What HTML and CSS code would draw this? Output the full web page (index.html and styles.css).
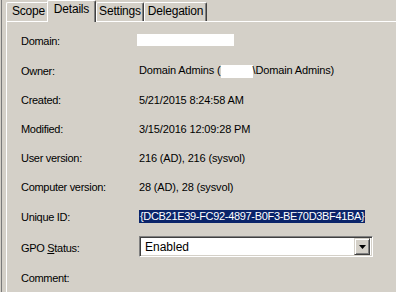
FILE: index.html
```html
<!DOCTYPE html>
<html>
<head>
<meta charset="utf-8">
<link rel="stylesheet" href="styles.css">
</head>
<body>
<div class="window">
  <div class="tabs">
    <div class="tab tab-scope">Scope</div>
    <div class="tab tab-details selected">Details</div>
    <div class="tab tab-settings">Settings</div>
    <div class="tab tab-delegation">Delegation</div>
  </div>
  <div class="panel">
    <div class="grid">
      <div class="label"><span>Domain:</span></div>
      <div class="value"><span class="redact redact-domain"></span></div>

      <div class="label"><span>Owner:</span></div>
      <div class="value"><span>Domain Admins (<span class="redact redact-owner"></span>\Domain Admins)</span></div>

      <div class="label"><span>Created:</span></div>
      <div class="value"><span>5/21/2015 8:24:58 AM</span></div>

      <div class="label"><span>Modified:</span></div>
      <div class="value"><span>3/15/2016 12:09:28 PM</span></div>

      <div class="label"><span>User version:</span></div>
      <div class="value"><span>216 (AD), 216 (sysvol)</span></div>

      <div class="label"><span>Computer version:</span></div>
      <div class="value"><span>28 (AD), 28 (sysvol)</span></div>

      <div class="label"><span>Unique ID:</span></div>
      <div class="value"><span class="selection">{DCB21E39-FC92-4897-B0F3-BE70D3BF41BA}</span></div>

      <div class="label"><span>GPO <u>S</u>tatus:</span></div>
      <div class="value">
        <div class="combo">
          <span class="combo-text">Enabled</span>
          <span class="combo-btn">
            <svg width="7" height="4" viewBox="0 0 7 4"><path d="M0 0H7L3.5 4Z" fill="#000"/></svg>
          </span>
        </div>
      </div>

      <div class="label"><span>Comment:</span></div>
      <div class="value"></div>
    </div>
  </div>
</div>
</body>
</html>
```

FILE: styles.css
```css
html, body {
  margin: 0;
  padding: 0;
}
body {
  background: #d4d0c8;
  font-family: "Liberation Sans", Arial, sans-serif;
  font-size: 11px;
  color: #000;
  width: 396px;
  height: 292px;
  overflow: hidden;
}
.window {
  height: 292px;
  border-left: 1px solid #7a7a7a;
  box-sizing: border-box;
  margin-left: 1px;
}
.tabs {
  display: flex;
  align-items: flex-end;
  height: 21px;
  padding-left: 4px;
  position: relative;
  z-index: 2;
}
.tab {
  box-sizing: border-box;
  height: 19px;
  border-top: 1px solid #fff;
  border-left: 1px solid #fff;
  border-right: 1px solid #404040;
  box-shadow: inset -1px 0 0 #808080;
  border-top-left-radius: 2px;
  border-top-right-radius: 2px;
  text-align: center;
  line-height: 17px;
  font-size: 12px;
  letter-spacing: -0.2px;
}
.tab-scope { width: 43px; padding-left: 2px; }
.tab-details { width: 46px; }
.tab-settings { width: 48px; margin-left: 1px; }
.tab-delegation { width: 63px; }
.tab.selected {
  height: 22px;
  width: 49px;
  margin: 0 -1px -1px -2px;
  background: #d4d0c8;
  line-height: 17px;
  padding-bottom: 3px;
}
.panel {
  margin-left: 4px;
  border-top: 1px solid #fff;
  border-left: 1px solid #fff;
  height: 271px;
  box-sizing: border-box;
  position: relative;
  z-index: 1;
}
.grid {
  display: grid;
  grid-template-columns: 118px 1fr;
  grid-template-rows: 30px 30px 28px 29px 29px 29px 31px 31px 30px;
  padding-top: 4px;
  padding-left: 14px;
}
.label, .value {
  display: flex;
  align-items: center;
  white-space: nowrap;
}
.label {
  letter-spacing: -0.3px;
}
.value {
  letter-spacing: -0.15px;
}
.redact {
  display: inline-block;
  vertical-align: middle;
  background: #fff;
}
.redact-domain {
  width: 97px;
  height: 12px;
  margin-left: -2px;
  margin-top: -3px;
}
.redact-owner {
  width: 32px;
  height: 13px;
}
.selection {
  background: #0a246a;
  color: #fff;
  line-height: 13px;
  padding: 0 1px;
  letter-spacing: -0.32px;
}
.combo {
  box-sizing: border-box;
  width: 234px;
  height: 21px;
  display: flex;
  align-items: center;
  background: #fff;
  border-top: 1px solid #808080;
  border-left: 1px solid #808080;
  border-right: 1px solid #fff;
  border-bottom: 1px solid #fff;
  box-shadow: inset 1px 1px 0 #404040, inset -1px -1px 0 #d4d0c8;
  padding: 2px;
  margin-top: -2px;
}
.combo-text {
  flex: 1;
  padding-left: 3px;
  font-size: 12px;
  letter-spacing: 0;
}
.combo-btn {
  box-sizing: border-box;
  width: 16px;
  height: 17px;
  background: #d4d0c8;
  border-top: 1px solid #d4d0c8;
  border-left: 1px solid #d4d0c8;
  border-right: 1px solid #404040;
  border-bottom: 1px solid #404040;
  box-shadow: inset 1px 1px 0 #fff, inset -1px -1px 0 #808080;
  display: flex;
  align-items: center;
  justify-content: center;
}
```
